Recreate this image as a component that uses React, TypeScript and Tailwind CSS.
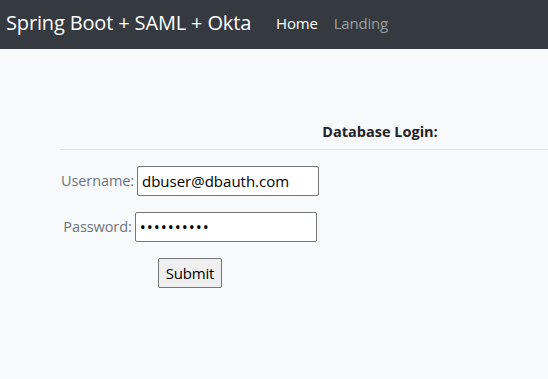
export default function App() {
  return (
    <div className="min-h-[379px] w-[548px] overflow-hidden bg-[#f8f9fa] font-['Open_Sans',sans-serif]">
      <nav className="flex h-[49px] items-center bg-[#343a40] pl-[6px]">
        <span className="pb-[3px] text-[20px] leading-none tracking-[-0.15px] text-white">Spring Boot + SAML + Okta</span>
        <a className="ml-[25px] pb-[3px] text-[15px] tracking-[-0.2px] text-white">Home</a>
        <a className="ml-[16px] pb-[3px] text-[15px] tracking-[-0.2px] text-white/50">Landing</a>
      </nav>

      <div className="ml-[60px] mt-[67px] w-[640px]">
        <div className="flex h-[34px] items-center justify-center border-b border-[#dee2e6] pb-[2px] text-[14.5px] font-bold text-[#212529]">
          Database Login:
        </div>
        <div className="flex w-[260px] flex-col items-center pt-[16px]">
          <div className="flex items-center gap-[3px]">
            <label className="text-[14.5px] tracking-[-0.1px] text-[#6c757d]">Username:</label>
            <input
              type="text"
              defaultValue="dbuser@dbauth.com"
              className="h-[30px] w-[182px] rounded-[2px] border border-[#767676] bg-white px-[4px] text-[15px] text-black outline-none"
            />
          </div>
          <div className="mt-[16px] flex items-center gap-[3px]">
            <label className="text-[14.5px] tracking-[-0.1px] text-[#6c757d]">Password:</label>
            <input
              type="password"
              defaultValue="dbpassword"
              className="h-[30px] w-[182px] rounded-[2px] border border-[#767676] bg-white px-[4px] text-[16px] tracking-[1px] text-black outline-none"
            />
          </div>
          <button className="mt-[16px] h-[30px] rounded-[2px] border border-[#767676] bg-[#efefef] px-[7px] text-[15px] tracking-[-0.2px] text-black">
            Submit
          </button>
        </div>
      </div>
    </div>
  )
}
